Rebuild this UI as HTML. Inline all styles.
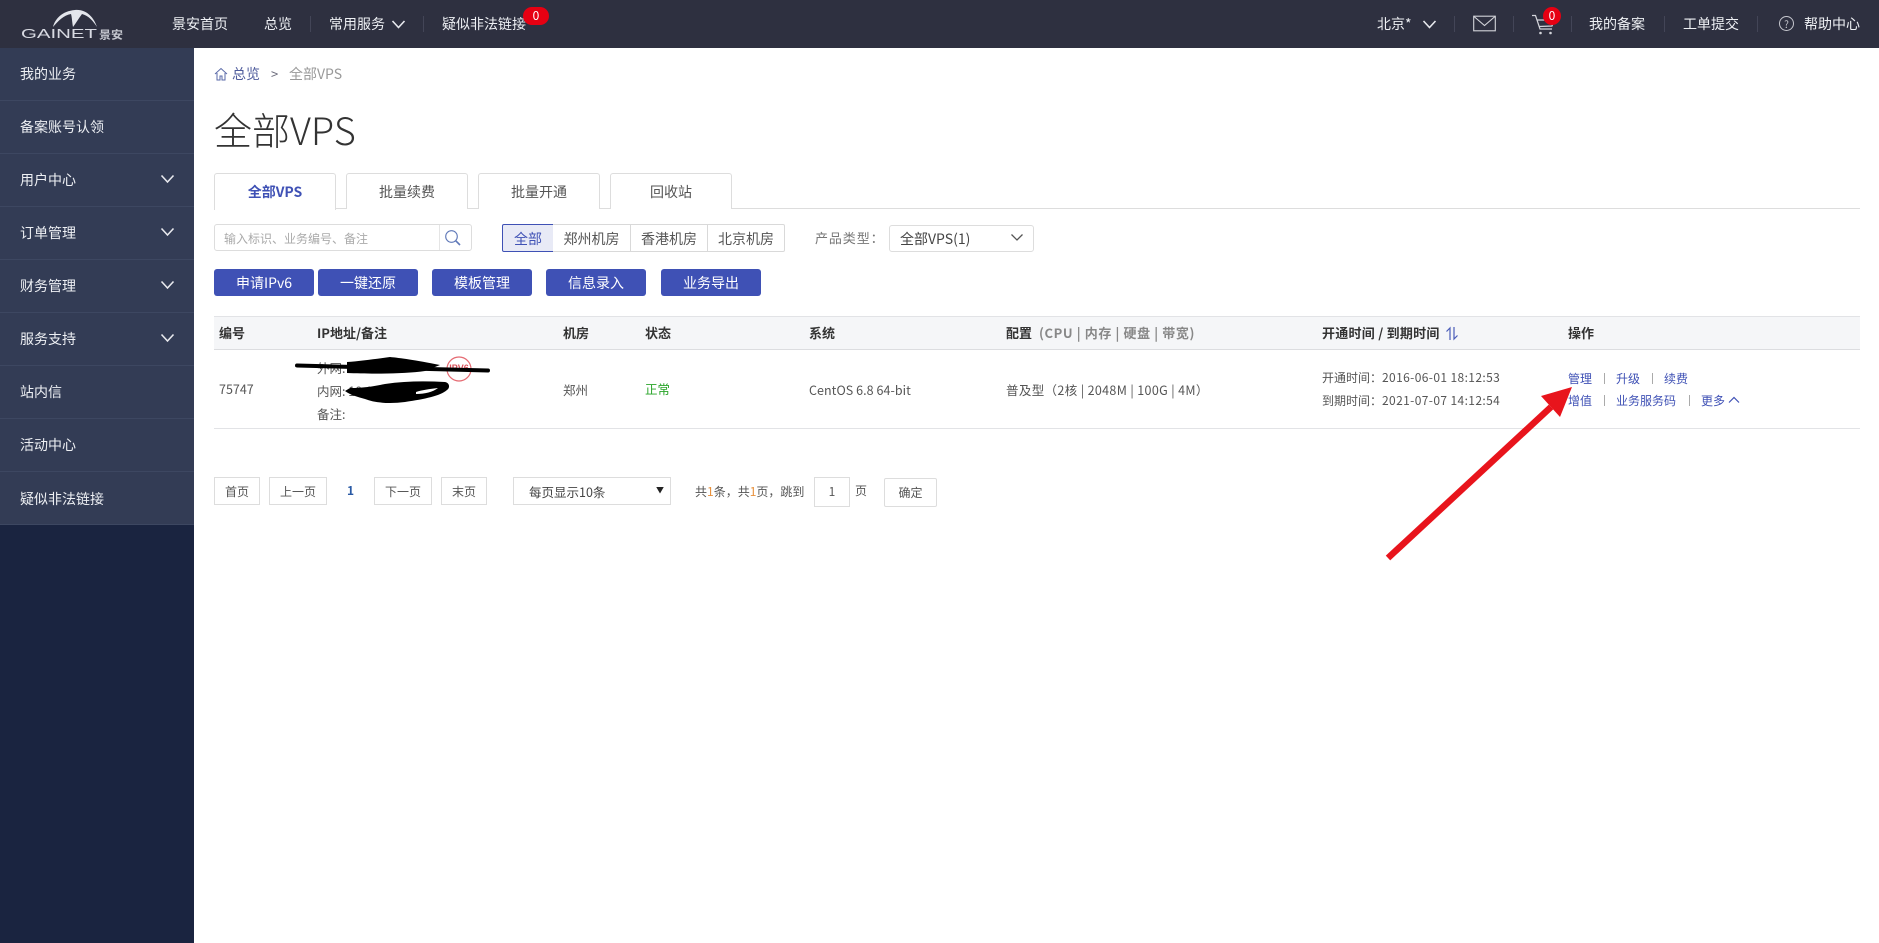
<!DOCTYPE html>
<html lang="zh-CN"><head><meta charset="utf-8"><title>全部VPS</title>
<style>
*{box-sizing:border-box}
html,body{margin:0;padding:0;width:1879px;height:943px;overflow:hidden;background:#fff}
body{position:relative;font-family:"Noto Sans CJK SC","Liberation Sans",sans-serif;font-size:12px;color:#555}
.t{position:absolute;white-space:nowrap;line-height:20px;height:20px}
.b{position:absolute}
.w{color:#eef0f4;font-size:14px}
.sep{position:absolute;width:1px;top:16px;height:16px;background:#434557}
.sl{position:absolute;left:0;width:194px;height:1px;background:#3d4761}
.tab{position:absolute;top:173px;height:36px;width:122px;border:1px solid #ddd;border-bottom:0;border-radius:3px 3px 0 0;background:#fff;text-align:center;line-height:36px;font-size:14px;color:#555}
.fb{position:absolute;top:224px;height:28px;border:1px solid #d9d9d9;text-align:center;line-height:28px;font-size:14px;color:#555;background:#fff}
.btn{position:absolute;top:269px;height:27px;width:100px;background:#3f51b5;border-radius:3px;color:#fff;text-align:center;line-height:28px;font-size:14px}
.pg{position:absolute;top:477px;height:28px;border:1px solid #ddd;text-align:center;line-height:28px;font-size:12px;color:#555;background:#fff}
.h{font-size:13px;font-weight:700;color:#333}
.c{font-size:12.5px;color:#555}
.a{font-size:12px;color:#3f51b5}
.p{position:absolute;width:1px;height:11px;background:#aaa}
.d{letter-spacing:.38px}
</style></head><body>

<!-- top bar -->
<div class="b" style="left:0;top:0;width:1879px;height:48px;background:#2e3040"></div>
<svg class="b" style="left:18px;top:6px" width="112" height="36" viewBox="0 0 112 36">
<path d="M35 21C37 13 44 5 57 4C69 3 76 12 79 21C75 15 71 10 64 8C61 12 58 17 55 21C54 16 54 11 53 8C46 9 40 15 35 21Z" fill="#e4e6ec"/>
<text x="3" y="32" font-family="Liberation Sans,sans-serif" font-size="12.500" fill="#d8dae2" textLength="76" lengthAdjust="spacingAndGlyphs">GAINET</text>
<text x="81" y="32.500" font-family="Noto Sans CJK SC,sans-serif" font-size="11" font-weight="700" fill="#c4c6ce" textLength="24" lengthAdjust="spacingAndGlyphs">景安</text>
</svg>

<div class="t w" style="left:172px;top:14px">景安首页</div>
<div class="t w" style="left:264px;top:14px">总览</div>
<div class="sep" style="left:310px"></div>
<div class="t w" style="left:329px;top:14px">常用服务</div>
<svg class="b" style="left:391px;top:18px" width="15" height="12" viewBox="0 0 15 12"><path d="M1.500 3L7.500 9.500L13.500 3" fill="none" stroke="#e8e9ee" stroke-width="1.600"/></svg>
<div class="sep" style="left:423px"></div>
<div class="t w" style="left:442px;top:14px">疑似非法链接</div>
<div class="b" style="left:523px;top:7px;width:26px;height:18px;border-radius:9px;background:#e60012;color:#fff;font-size:12px;line-height:18px;text-align:center">0</div>

<div class="t w" style="left:1377px;top:14px">北京*</div>
<svg class="b" style="left:1422px;top:18px" width="15" height="12" viewBox="0 0 15 12"><path d="M1.500 3L7.500 9.500L13.500 3" fill="none" stroke="#e8e9ee" stroke-width="1.600"/></svg>
<div class="sep" style="left:1454px"></div>
<svg class="b" style="left:1473px;top:15px" width="23" height="17" viewBox="0 0 23 17"><rect x=".7" y="1.200" width="21.600" height="14.600" fill="none" stroke="#d3d4da" stroke-width="1.100"/><path d="M1 1.500L11.500 10.500L22 1.500" fill="none" stroke="#d3d4da" stroke-width="1.100"/></svg>
<div class="sep" style="left:1513px"></div>
<svg class="b" style="left:1531px;top:13px" width="26" height="23" viewBox="0 0 26 23"><path d="M1 2.500H4.500L9 16H21M6 7H23L21 13L8 13.500" fill="none" stroke="#d3d4da" stroke-width="1.200"/><circle cx="9.500" cy="20" r="1.300" fill="#d3d4da"/><circle cx="19.500" cy="20" r="1.300" fill="#d3d4da"/></svg>
<div class="b" style="left:1543px;top:7px;width:18px;height:18px;border-radius:50%;background:#e60012;color:#fff;font-size:12px;line-height:18px;text-align:center">0</div>
<div class="sep" style="left:1571px"></div>
<div class="t w" style="left:1589px;top:14px">我的备案</div>
<div class="sep" style="left:1664px"></div>
<div class="t w" style="left:1683px;top:14px">工单提交</div>
<div class="sep" style="left:1757px"></div>
<div class="b" style="left:1779px;top:16px;width:15px;height:15px;border:1px solid #c6c7ce;border-radius:50%;color:#c6c7ce;font-size:10px;line-height:13px;text-align:center">?</div>
<div class="t w" style="left:1804px;top:14px">帮助中心</div>

<!-- sidebar -->
<div class="b" style="left:0;top:48px;width:194px;height:895px;background:#1a2440"></div>
<div class="b" style="left:0;top:48px;width:194px;height:477px;background:#333c55"></div>
<div class="sl" style="top:100px"></div><div class="sl" style="top:153px"></div><div class="sl" style="top:206px"></div><div class="sl" style="top:259px"></div><div class="sl" style="top:312px"></div><div class="sl" style="top:365px"></div><div class="sl" style="top:418px"></div><div class="sl" style="top:471px"></div><div class="sl" style="top:524px"></div>
<div class="t w" style="left:20px;top:64px">我的业务</div>
<div class="t w" style="left:20px;top:117px">备案账号认领</div>
<div class="t w" style="left:20px;top:170px">用户中心</div>
<div class="t w" style="left:20px;top:223px">订单管理</div>
<div class="t w" style="left:20px;top:276px">财务管理</div>
<div class="t w" style="left:20px;top:329px">服务支持</div>
<div class="t w" style="left:20px;top:382px">站内信</div>
<div class="t w" style="left:20px;top:435px">活动中心</div>
<div class="t w" style="left:20px;top:489px">疑似非法链接</div>
<svg class="b" style="left:160px;top:173px" width="15" height="12" viewBox="0 0 15 12"><path d="M1.500 2.500L7.500 9L13.500 2.500" fill="none" stroke="#e8e9ee" stroke-width="1.600"/></svg>
<svg class="b" style="left:160px;top:226px" width="15" height="12" viewBox="0 0 15 12"><path d="M1.500 2.500L7.500 9L13.500 2.500" fill="none" stroke="#e8e9ee" stroke-width="1.600"/></svg>
<svg class="b" style="left:160px;top:279px" width="15" height="12" viewBox="0 0 15 12"><path d="M1.500 2.500L7.500 9L13.500 2.500" fill="none" stroke="#e8e9ee" stroke-width="1.600"/></svg>
<svg class="b" style="left:160px;top:332px" width="15" height="12" viewBox="0 0 15 12"><path d="M1.500 2.500L7.500 9L13.500 2.500" fill="none" stroke="#e8e9ee" stroke-width="1.600"/></svg>

<!-- breadcrumb -->
<svg class="b" style="left:214px;top:67px" width="14" height="14" viewBox="0 0 14 14"><path d="M1 7L7 1.500L13 7M3 6V13H6V9H8V13H11V6" fill="none" stroke="#5a6aa8" stroke-width="1"/></svg>
<div class="t" style="left:232px;top:64px;font-size:14px;color:#4f5c9c">总览</div>
<div class="t" style="left:271px;top:64px;font-size:13px;color:#667">&gt;</div>
<div class="t" style="left:289px;top:64px;font-size:14px;color:#999">全部VPS</div>
<div class="t" style="left:214px;top:109px;height:40px;line-height:40px;font-size:38px;font-weight:300;color:#333">全部VPS</div>

<!-- tabs -->
<div class="b" style="left:214px;top:208px;width:1646px;height:1px;background:#ddd"></div>
<div class="tab" style="left:214px;color:#3f51b5;font-weight:700;height:37px">全部VPS</div>
<div class="tab" style="left:346px">批量续费</div>
<div class="tab" style="left:478px">批量开通</div>
<div class="tab" style="left:610px">回收站</div>

<!-- search -->
<div class="b" style="left:214px;top:224px;width:258px;height:27px;border:1px solid #ddd;border-radius:3px"></div>
<div class="b" style="left:439px;top:225px;width:1px;height:25px;background:#e5e5e5"></div>
<div class="t" style="left:224px;top:229px;color:#aaa;font-size:12px">输入标识、业务编号、备注</div>
<svg class="b" style="left:444px;top:229px" width="18" height="18" viewBox="0 0 18 18"><circle cx="7.500" cy="7.500" r="5.800" fill="none" stroke="#5f78b8" stroke-width="1.100"/><path d="M11.800 11.800L16 16" stroke="#5f78b8" stroke-width="1.600"/></svg>

<!-- filter -->
<div class="fb" style="left:502px;width:52px;background:#e8eaf6;border-color:#3f51b5;color:#3f51b5;border-radius:2px 0 0 2px;line-height:26px;padding-top:1px">全部</div>
<div class="fb" style="left:553px;width:78px;border-left:0;line-height:26px;padding-top:1px">郑州机房</div>
<div class="fb" style="left:630px;width:78px;border-left:1px solid #d9d9d9;line-height:26px;padding-top:1px">香港机房</div>
<div class="fb" style="left:707px;width:78px;border-radius:0 2px 2px 0;line-height:26px;padding-top:1px">北京机房</div>
<div class="t" style="left:815px;top:228px;font-size:13px;color:#777;letter-spacing:.9px">产品类型：</div>
<div class="b" style="left:889px;top:225px;width:145px;height:27px;border:1px solid #ddd;border-radius:3px"></div>
<div class="t" style="left:900px;top:229px;font-size:14px;color:#444">全部VPS(1)</div>
<svg class="b" style="left:1010px;top:232px" width="14" height="11" viewBox="0 0 14 11"><path d="M1.500 2.500L7 8L12.500 2.500" fill="none" stroke="#555" stroke-width="1.300"/></svg>

<!-- buttons -->
<div class="btn" style="left:214px">申请IPv6</div>
<div class="btn" style="left:318px">一键还原</div>
<div class="btn" style="left:432px">模板管理</div>
<div class="btn" style="left:546px">信息录入</div>
<div class="btn" style="left:661px">业务导出</div>

<!-- table -->
<div class="b" style="left:214px;top:316px;width:1646px;height:34px;background:#f5f6f8;border-top:1px solid #e2e3e6;border-bottom:1px solid #dcdde0"></div>
<div class="b" style="left:214px;top:428px;width:1646px;height:1px;background:#e2e3e6"></div>
<div class="t h" style="left:219px;top:323px">编号</div>
<div class="t h" style="left:317px;top:323px">IP地址/备注</div>
<div class="t h" style="left:563px;top:323px">机房</div>
<div class="t h" style="left:645px;top:323px">状态</div>
<div class="t h" style="left:809px;top:323px">系统</div>
<div class="t h" style="left:1006px;top:323px">配置<span style="color:#888;margin-left:7px;letter-spacing:.6px">(CPU | 内存 | 硬盘 | 带宽)</span></div>
<div class="t h" style="left:1322px;top:323px;letter-spacing:.25px">开通时间 / 到期时间</div>
<svg class="b" style="left:1445px;top:326px" width="14" height="15" viewBox="0 0 14 15"><path d="M5 14V2L1.500 5.500M9 1V13L12.500 9.500" fill="none" stroke="#4a5cb8" stroke-width="1.200"/></svg>
<div class="t h" style="left:1568px;top:323px">操作</div>

<div class="t c" style="left:219px;top:379px">75747</div>
<div class="t c" style="left:317px;top:358px">外网:</div>
<div class="t c" style="left:317px;top:381px">内网: 10.1</div>
<div class="t c" style="left:317px;top:404px">备注:</div>
<svg class="b" style="left:290px;top:350px" width="210" height="60" viewBox="0 0 210 60">
<circle cx="169" cy="19" r="12" fill="none" stroke="#e56a72" stroke-width="1.200"/>
<text x="169" y="21" text-anchor="middle" font-family="Liberation Sans,sans-serif" font-size="9" font-weight="700" fill="#d9505a">IPV6</text>
<path d="M7 15.500L198 20.500" stroke="#000" stroke-width="4" stroke-linecap="round"/>
<path d="M57 12C70 11 85 9 100 7C110 8 125 10 150 15L135 21C115 24 80 24 57 23Z" fill="#000"/>
<path d="M55 41L60 38C75 38 85 36 95 34C115 31 135 31 155 32C160 33 160 38 157 40C150 46 135 49 115 52C100 54 85 53 75 49C68 47 60 45 55 41Z" fill="#000"/>
<path d="M126 42C132 40 140 39 148 38C143 42 135 44 126 44Z" fill="#fff"/>
</svg>
<div class="t c" style="left:563px;top:380px">郑州</div>
<div class="t c" style="left:645px;top:379px;color:#2aa52a">正常</div>
<div class="t c" style="left:809px;top:380px;letter-spacing:.05px">CentOS 6.8 64-bit</div>
<div class="t c" style="left:1006px;top:380px;letter-spacing:.35px">普及型（2核 | 2048M | 100G | 4M）</div>
<div class="t c" style="left:1322px;top:368px;font-size:12px">开通时间：<span class="d">2016-06-01 18:12:53</span></div>
<div class="t c" style="left:1322px;top:391px;font-size:12px">到期时间：<span class="d">2021-07-07 14:12:54</span></div>

<div class="t a" style="left:1568px;top:369px">管理</div><div class="p" style="left:1604px;top:373px"></div>
<div class="t a" style="left:1616px;top:369px">升级</div><div class="p" style="left:1652px;top:373px"></div>
<div class="t a" style="left:1664px;top:369px">续费</div>
<div class="t a" style="left:1568px;top:391px">增值</div><div class="p" style="left:1604px;top:395px"></div>
<div class="t a" style="left:1616px;top:391px">业务服务码</div><div class="p" style="left:1689px;top:395px"></div>
<div class="t a" style="left:1701px;top:391px">更多</div>
<svg class="b" style="left:1728px;top:395px" width="12" height="10" viewBox="0 0 12 10"><path d="M1 7.500L6 2.500L11 7.500" fill="none" stroke="#3f51b5" stroke-width="1.200"/></svg>

<!-- pagination -->
<div class="pg" style="left:214px;width:46px">首页</div>
<div class="pg" style="left:269px;width:58px">上一页</div>
<div class="t" style="left:347px;top:481px;color:#2a5aa5;font-weight:700">1</div>
<div class="pg" style="left:374px;width:58px">下一页</div>
<div class="pg" style="left:441px;width:46px">末页</div>
<div class="pg" style="left:513px;width:158px;text-align:left;padding-left:15px;color:#444;font-size:12.500px">每页显示10条</div>
<div class="t" style="left:656px;top:481px;font-size:8px;color:#222">▼</div>
<div class="t" style="left:695px;top:482px">共<span style="color:#e8903a">1</span>条，共<span style="color:#e8903a">1</span>页，跳到</div>
<div class="pg" style="left:814px;width:36px;height:30px;line-height:28px">1</div>
<div class="t" style="left:855px;top:481px">页</div>
<div class="pg" style="left:884px;top:478px;width:53px;height:29px;line-height:27px;border-radius:2px">确定</div>

<!-- annotation arrow -->
<svg class="b" style="left:0;top:0" width="1879" height="943" viewBox="0 0 1879 943">
<path d="M1388 558L1551 407" stroke="#e8141c" stroke-width="6.500" fill="none"/>
<path d="M1572 387L1541 396L1560 417Z" fill="#e8141c"/>
</svg>
</body></html>
